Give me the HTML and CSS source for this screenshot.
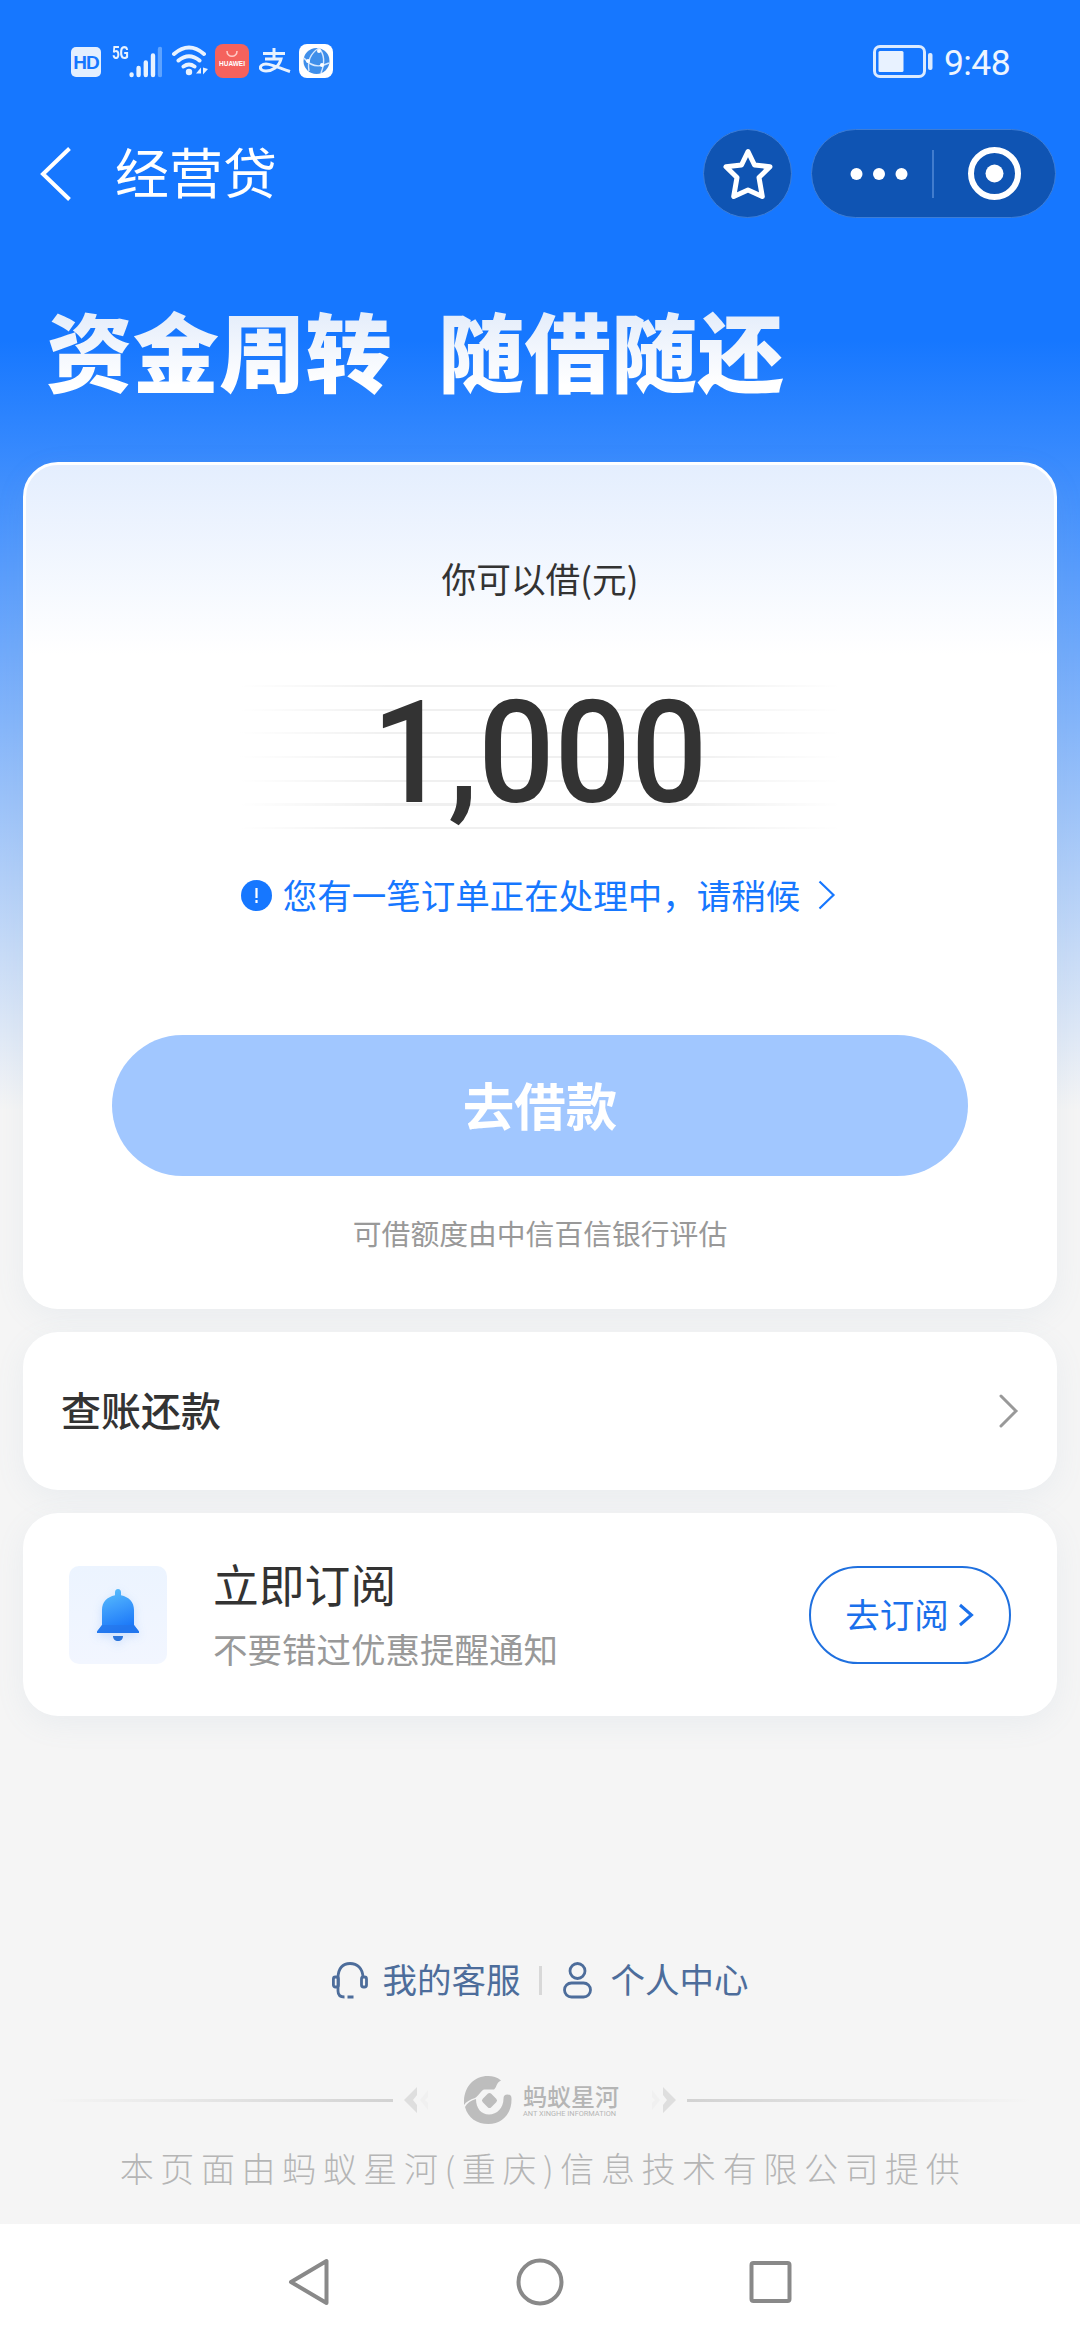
FILE: index.html
```html
<!DOCTYPE html>
<html lang="zh-CN">
<head>
<meta charset="utf-8">
<title>经营贷</title>
<link rel="stylesheet" href="styles.css">
</head>
<body>
<div class="page">
  <div class="status">
    <div class="status-left">
      <span class="hd">HD</span>
      <span class="network">5G</span>
      <svg class="signal" width="33" height="32" viewBox="0 0 33 32" fill="none" stroke="#e8f2ff" stroke-width="4.4" stroke-linecap="round"><path d="M2.6 28.4v.6M9.6 22v7M16.8 16.500v12.500M24 9.500v19.500"/><path d="M31 3v26" stroke="#5ea3ff"/></svg>
      <svg class="wifi" width="40" height="32" viewBox="0 0 40 32" fill="none" stroke="#e8f2ff" stroke-width="4" stroke-linecap="round"><path d="M3 9Q18-4 33 9M7.500 15.500Q18 7 28.500 15.500M12.500 21.500Q18 17.500 23.500 21.500"/><circle cx="18" cy="27" r="3.200" fill="#e8f2ff" stroke="none"/><path d="M25 28.500l5-6v6zM32 22.500v7l5-5.500z" fill="#e8f2ff" stroke="none"/></svg>
      <span class="huawei"><svg width="14" height="8" viewBox="0 0 14 8" fill="none" stroke="#ffc9c5" stroke-width="1.600"><path d="M2 1c0 7 10 7 10 0"/></svg><b>HUAWEI</b></span>
      <svg class="alipay" width="32" height="26" viewBox="0 0 32 26" fill="none" stroke="#e8f2ff" stroke-width="3"><path d="M4 5.500h22M15 0v11M6 11h16C20 19 13 23 7 23C2 23 0 20 2.500 17.500C7 13.500 16 18.500 31 23.500"/></svg>
      <svg class="browser" width="34" height="34" viewBox="0 0 34 34"><rect width="34" height="34" rx="8" fill="#fff"/><circle cx="17.500" cy="17" r="13" fill="#3f8fea"/><path d="M20 4C12 9 8 16 10 27M5 14c7 9 15 10 25 5M20 4c6 7 6 15 2 25" fill="none" stroke="#d5e8ff" stroke-width="1.400"/><g fill="#fff"><circle cx="9" cy="17" r="2"/><circle cx="20" cy="7" r="2"/><circle cx="23" cy="21" r="2"/></g></svg>
    </div>
    <div class="status-right">
      <svg width="60" height="34" viewBox="0 0 60 34"><rect x="1.500" y="1.500" width="50" height="30" rx="5.500" fill="none" stroke="#dcebff" stroke-width="3"/><rect x="5.500" y="6" width="25" height="21" rx="1.500" fill="#e8f2ff"/><rect x="55" y="8" width="4.500" height="17" rx="2" fill="#dcebff"/></svg>
      <span class="time">9:48</span>
    </div>
  </div>

  <header class="navbar">
    <svg class="back" width="34" height="54" viewBox="0 0 34 54" fill="none" stroke="#fff" stroke-width="4"><path d="M30.500 1.500L4 27l26.500 25.500"/></svg>
    <h1 class="title">经营贷</h1>
    <div class="star"><svg width="52" height="54" viewBox="0 0 52 54" fill="none" stroke="#fff" stroke-width="5" stroke-linejoin="round"><path d="M26 4.500l6.500 13.500L48 19.800 37 30.500 40.300 49.500 26 43 11.700 49.500 15 30.500 4 19.800 19.500 18z"/></svg></div>
    <div class="capsule">
      <svg width="243" height="87" viewBox="0 0 243 87"><g fill="#fff"><circle cx="44.500" cy="44" r="6"/><circle cx="67" cy="44" r="6"/><circle cx="89.500" cy="44" r="6"/><circle cx="182.500" cy="43.500" r="9"/></g><path d="M121 20v48" stroke="#5e93dc" stroke-width="1.300"/><circle cx="182.500" cy="43.500" r="23.500" fill="none" stroke="#fff" stroke-width="6"/></svg>
    </div>
  </header>

  <div class="slogan"><span>资金周转</span><span>随借随还</span></div>

  <main class="cards">
    <section class="card loan">
      <div class="loan-label">你可以借(元)</div>
      <div class="amount-box"><div class="amount">1<span class="comma">,</span>000</div></div>
      <div class="notice">
        <svg width="31" height="31" viewBox="0 0 31 31"><circle cx="15.500" cy="15.500" r="15.500" fill="#1677ff"/><path d="M15.500 8v10M15.500 20v3" stroke="#fff" stroke-width="2.200"/></svg>
        <span>您有一笔订单正在处理中，请稍候</span>
        <svg class="notice-arrow" width="18" height="30" viewBox="0 0 18 30" fill="none" stroke="#1677ff" stroke-width="2.200"><path d="M1.500 1.500L15.500 15 1.500 28.500"/></svg>
      </div>
      <div class="borrow">去借款</div>
      <div class="lender">可借额度由中信百信银行评估</div>
    </section>

    <section class="card bill">
      <span>查账还款</span>
      <svg width="20" height="34" viewBox="0 0 20 34" fill="none" stroke="#999" stroke-width="3" stroke-linecap="round"><path d="M2 2l15 15L2 32"/></svg>
    </section>

    <section class="card subscribe">
      <div class="bell">
        <svg width="46" height="54" viewBox="0 0 46 54"><defs><linearGradient id="bell" x1="0" y1="0" x2=".35" y2="1"><stop offset="0" stop-color="#5fc5fb"/><stop offset=".5" stop-color="#3e9dfc"/><stop offset="1" stop-color="#1b78f8"/></linearGradient></defs><path d="M23 1c2 0 3 1.500 3 3.500v2.700C34 9 39 14 39 22v15l5 6.500V45H2v-1.500L7 37V22C7 14 12 9 20 7.200V4.500C20 2.500 21 1 23 1z" fill="url(#bell)"/><path d="M7 37h32l5 6.500V45H2v-1.500z" fill="#2674e8" opacity=".6"/><path d="M18 48h10c0 3-2 5-5 5s-5-2-5-5z" fill="#2b75dc"/></svg>
      </div>
      <div class="sub-text">
        <div class="sub-title">立即订阅</div>
        <div class="sub-desc">不要错过优惠提醒通知</div>
      </div>
      <div class="sub-btn"><span>去订阅</span><svg width="17" height="24" viewBox="0 0 17 24" fill="none" stroke="#1a70eb" stroke-width="3"><path d="M2 2l11.500 10L2 22"/></svg></div>
    </section>
  </main>

  <div class="links">
    <svg class="headset" width="36" height="37" viewBox="0 0 36 37" fill="none" stroke="#4d6d9b" stroke-width="2.800"><path d="M6 16v13c0 4 2 6 6.500 6M6 16C6 6 11 1.500 18 1.500S31 6 31 16M15.500 35h6"/><rect x="1.400" y="15" width="5" height="10" rx="2"/><rect x="29.500" y="15" width="5" height="10" rx="2"/></svg>
    <span>我的客服</span>
    <i class="divider"></i>
    <svg class="person" width="29" height="37" viewBox="0 0 29 37" fill="none" stroke="#4d6d9b" stroke-width="2.800"><circle cx="14.500" cy="9" r="7.500"/><rect x="1.500" y="21" width="26" height="14" rx="7"/></svg>
    <span>个人中心</span>
  </div>

  <footer class="provider">
    <div class="brand">
      <i class="rule rule-left"></i>
      <svg class="angle-left" width="26" height="26" viewBox="0 0 26 26"><path d="M13 0v8L9 13l4 5v8L0 13z" fill="#dedede"/><path d="M24 3v7l-3 3 3 3v7L16 13z" fill="#f0f0f0"/></svg>
      <svg class="logo" width="48" height="48" viewBox="0 0 48 48"><path d="M0 29C-1 12 9 0 24 0c5 0 9 1 13 4.500-5 2-4 7-7 9H20c-3 1-5 6-9 8.500C6 23.500 2 26 0 29z" fill="#bdbdbd"/><path d="M1 31C3 27 7 24.500 12 23c0 9 5 15.500 13 15.500S39.500 32 39.500 22.500a4 4 0 0 1 8 0C48 38 38 48 24.500 48 13 48 4 42 1 31z" fill="#bdbdbd"/><rect x="19.500" y="18.500" width="12" height="12" rx="2.500" transform="rotate(45 25.500 24.500)" fill="#bdbdbd"/></svg>
      <div class="brand-name"><b>蚂蚁星河</b><small>ANT XINGHE INFORMATION</small></div>
      <svg class="angle-right" width="26" height="26" viewBox="0 0 26 26"><path d="M13 0v8l4 5-4 5v8l13-13z" fill="#dedede"/><path d="M2 3v7l3 3-3 3v7l8-10z" fill="#f0f0f0"/></svg>
      <i class="rule rule-right"></i>
    </div>
    <div class="company">本页面由蚂蚁星河(重庆)信息技术有限公司提供</div>
  </footer>

  <nav class="sysnav">
    <svg width="43" height="48" viewBox="0 0 43 48" fill="none" stroke="#898989" stroke-width="4" stroke-linejoin="round"><path d="M38.500 3v42L3 24z"/></svg>
    <svg width="48" height="48" viewBox="0 0 48 48" fill="none" stroke="#898989" stroke-width="4"><circle cx="24" cy="24" r="21.500"/></svg>
    <svg width="43" height="48" viewBox="0 0 43 48" fill="none" stroke="#898989" stroke-width="4"><rect x="2.500" y="5" width="38" height="38" rx="2"/></svg>
  </nav>
</div>
</body>
</html>
```
FILE: styles.css
```css
* { box-sizing: border-box; }
body { margin: 0; font-family: "Noto Sans CJK SC", "Noto Sans", sans-serif; color: #333; }
svg { display: block; flex: none; }
.page {
  width: 1080px; height: 2340px; display: flex; flex-direction: column; overflow: hidden;
  background: linear-gradient(180deg, #1677ff 0, #1677ff 340px, #f5f5f5 1110px);
}

/* status bar */
.status { height: 129px; padding: 44px 71px 0; display: flex; justify-content: space-between; align-items: flex-start; }
.status-left, .status-right { display: flex; align-items: flex-start; }
.hd { width: 30px; height: 30px; margin-top: 3px; border-radius: 5px; background: #e3efff; color: #1677ff; font: 700 19px/31px "Liberation Sans", sans-serif; letter-spacing: -1px; text-align: center; }
.network { width: 17px; margin-left: 11px; color: #e8f2ff; font: 700 19px/18px Roboto, sans-serif; letter-spacing: -.5px; transform: scaleX(.72); transform-origin: left; }
.signal { margin: 2px 0 0 0; }
.wifi { margin: 1px 0 0 9px; }
.huawei { width: 34px; height: 34px; margin-left: 4px; border-radius: 8px; background: #f5625d; display: flex; flex-direction: column; align-items: center; padding-top: 6px; color: #fff; }
.huawei b { font: 700 6.500px/12px "Liberation Sans", sans-serif; }
.alipay { margin: 4px 0 0 10px; }
.browser { margin-left: 8px; }
.status-right svg { margin-top: 1px; }
.time { margin-left: 11px; color: #eef5ff; font: 400 35.500px/39px Roboto, sans-serif; letter-spacing: -.6px; margin-right: -1px; }

/* title bar */
.navbar { height: 89px; padding: 0 24px 0 39px; display: flex; align-items: center; }
.title { margin: 0 auto 0 42px; padding-bottom: 5px; font-size: 54px; line-height: 80px; font-weight: 400; color: #fff; }
.star, .capsule { height: 89px; border: 1px solid #3d7dd6; background: #0f54b3; border-radius: 45px; flex: none; }
.star { width: 89px; margin-right: 19px; display: flex; align-items: center; justify-content: center; }
.capsule { width: 245px; }

.slogan { height: 244px; padding: 73px 0 0 46px; display: flex; gap: 46px; font-size: 86.500px; line-height: 116px; font-weight: 900; }
.slogan span { color: transparent; background: linear-gradient(180deg, #e6eefb 15%, #fff 55%); -webkit-background-clip: text; background-clip: text; }

/* cards */
.cards { display: flex; flex-direction: column; gap: 23px; padding: 0 23px; }
.card { background: #fff; border-radius: 35px; box-shadow: 0 8px 30px rgba(120, 150, 185, .09); }
.loan { height: 847px; border: 3px solid #fff; background: linear-gradient(180deg, #e4eefe 0, #fff 190px); display: flex; flex-direction: column; align-items: center; }
.loan-label { margin-top: 88px; font-size: 34.700px; line-height: 50px; }
.amount-box {
  width: 600px; height: 144px; margin-top: 82px; display: flex; justify-content: center;
  background:
    linear-gradient(90deg, #fff 0, transparent 25%, transparent 75%, #fff 100%),
    repeating-linear-gradient(180deg, #f0f0f0 0, #f0f0f0 2px, #fff 2px, #fff 23.700px);
}
.amount { font: 500 143px/136px Roboto, sans-serif; transform: scaleX(.94); white-space: nowrap; }
.notice { height: 50px; margin-top: 41px; display: flex; align-items: center; color: #1677ff; font-size: 34.500px; line-height: 50px; }
.notice span { margin-left: 11px; padding-bottom: 3px; }
.notice-arrow { margin: 0 3px 0 18px; }
.borrow { width: 856px; height: 141px; margin-top: 115px; border-radius: 71px; background: #a1c7ff; color: #fff; font-size: 51.500px; line-height: 137px; font-weight: 700; text-align: center; }
.lender { margin-top: 35px; font-size: 28.800px; line-height: 44px; color: #999; }

.bill { height: 158px; padding: 0 38px; display: flex; align-items: center; justify-content: space-between; font-size: 40px; font-weight: 500; line-height: 58px; }
.bill span { padding-bottom: 5px; }
.subscribe { height: 203px; padding: 0 46px; display: flex; align-items: center; }
.bell { width: 98px; height: 98px; border-radius: 10px; background: linear-gradient(180deg, #ecf4ff, #f2f6ff); display: flex; align-items: center; justify-content: center; flex: none; }
.bell svg { filter: drop-shadow(0 3px 5px rgba(40, 120, 240, .18)); }
.sub-text { margin: 0 auto 0 46px; padding-bottom: 5px; }
.sub-title { font-size: 45.800px; line-height: 64px; }
.sub-desc { font-size: 34.500px; line-height: 50px; margin-top: 8px; color: #999; }
.sub-btn { width: 202px; height: 98px; border: 2px solid #1f70df; border-radius: 49px; color: #1a70eb; font-size: 34.500px; line-height: 50px; display: flex; align-items: center; justify-content: center; gap: 9px; flex: none; }
.sub-btn span { padding-bottom: 4px; }

/* service links */
.links { margin-top: 239px; height: 50px; display: flex; align-items: center; justify-content: center; color: #4d6d9b; font-size: 34.500px; line-height: 50px; }
.links span { padding-bottom: 4px; }
.headset { margin-right: 15px; }
.divider { width: 3px; height: 29px; background: #d8d8d8; margin: 0 21px 0 18px; }
.person { margin-right: 19px; }

/* provider */
.provider { margin-top: 71px; height: 148px; }
.brand { height: 48px; display: flex; align-items: center; justify-content: center; }
.rule { width: 345px; height: 3px; }
.rule-left { background: linear-gradient(90deg, transparent, #d2d2d2); }
.rule-right { background: linear-gradient(270deg, transparent, #d2d2d2); }
.angle-left { margin: 0 34px 0 11px; }
.logo { margin-right: 11px; }
.brand-name { width: 95px; color: #b5b5b5; white-space: nowrap; }
.brand-name b { display: block; font-size: 24px; line-height: 25px; font-weight: 500; }
.brand-name small { display: block; font: 7.400px/9px Roboto, sans-serif; margin-top: 1px; }
.angle-right { margin: 0 11px 0 32px; }
.company { margin-top: 19px; padding-left: 6px; text-align: center; font-size: 34px; line-height: 50px; font-weight: 300; letter-spacing: 6.600px; color: #b5b5b5; white-space: nowrap; }

/* system navigation */
.sysnav { height: 116px; background: #fff; display: flex; align-items: center; justify-content: center; gap: 185px; }
```
